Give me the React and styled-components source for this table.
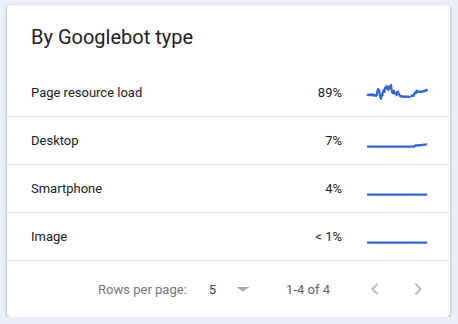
import React from "react";
import styled, { createGlobalStyle } from "styled-components";

const Global = createGlobalStyle`
  html, body { margin: 0; padding: 0; background: #eceef7; }
  body { font-family: Roboto, "Liberation Sans", Arial, sans-serif; }
  #root { padding: 5px 0 0 7px; }
`;

const Card = styled.div`
  width: 443px;
  height: 312px;
  background: #fff;
  border-radius: 4px;
  box-shadow: 0 1px 2px rgba(60, 64, 67, 0.3), 0 1px 3px 1px rgba(60, 64, 67, 0.15);
  display: flex;
  flex-direction: column;
  overflow: hidden;
`;

const Header = styled.div`
  height: 64px;
  display: flex;
  align-items: center;
  padding: 0 24px;
`;

const Title = styled.h2`
  margin: 0;
  font-size: 20px;
  line-height: 28px;
  font-weight: 400;
  color: #202124;
`;

const Row = styled.div`
  height: 47px;
  border-bottom: 1px solid #e0e0e0;
  display: flex;
  align-items: center;
  padding: 0 23px 0 24px;
  font-size: 13px;
  color: #202124;
`;

const Label = styled.div`
  flex: 1;
`;

const Value = styled.div`
  width: 80px;
  text-align: right;
  margin-right: 25px;
`;

const Spark = styled.svg`
  width: 60px;
  height: 20px;
  display: block;
  overflow: visible;
`;

const Footer = styled.div`
  flex: 1;
  display: flex;
  align-items: center;
  justify-content: flex-end;
  padding-right: 20px;
  font-size: 13px;
  color: #757575;
`;

const RowsLabel = styled.span`
  margin-right: 22px;
`;

const PageSize = styled.span`
  color: #424242;
  margin-right: 15px;
`;

const Icon = styled.svg`
  width: 24px;
  height: 24px;
  display: block;
  fill: ${(p) => p.$color};
`;

const Range = styled.span`
  margin: 0 33px 0 31px;
  color: #616161;
`;

const NavGap = styled.div`
  width: 19px;
`;

const rows = [
  {
    label: "Page resource load",
    value: "89%",
    points:
      "0,11.3 1,12.2 2,11.6 3,12.4 4,11.2 5,12.3 6,11.5 7,12.6 8,12 9,12.8 9.7,12.3 10.5,8 11,6 11.6,9 12.2,7 13,14 13.6,12 14,16 15,11 15.5,12.5 16,8 17,7 17.5,9 18,5 19,4.5 19.7,3 20.5,6 21,4 21.5,7 22,5 23,3 23.6,5 24,2 24.5,6 25,9 25.7,10 26.3,8 27,7.7 27.5,10.5 28,10 29,11 29.7,12 30.3,9 31,8.7 31.5,10.5 32,11 33,13 34,13.6 35,13.1 36,13.8 37,13.3 38,13.9 39,13.4 40,14 41,13.6 42,14.1 43,13.7 44,13.2 45,12.8 46,12 46.5,13 47,11 48,9.5 48.6,10.5 49.7,7.7 50.5,9 51,8.8 52,8.3 53,9 53.5,8.7 54.7,8.9 55.5,8.4 56,8.2 57,8.6 57.5,7.6 58.5,7.4 59.3,7.8 60,6",
  },
  {
    label: "Desktop",
    value: "7%",
    points: "0,15.7 47,15.7 48.5,14.3 50,14.6 51,14 52,14.5 53,14 54,14.4 55,13.8 56,14.1 57,13.5 58,13.8 60,13",
  },
  { label: "Smartphone", value: "4%", points: "0,15.7 60,15.7" },
  { label: "Image", value: "< 1%", points: "0,15.7 60,15.7" },
];

export default function App() {
  return (
    <>
      <Global />
      <Card>
        <Header>
          <Title>By Googlebot type</Title>
        </Header>
        {rows.map((r) => (
          <Row key={r.label}>
            <Label>{r.label}</Label>
            <Value>{r.value}</Value>
            <Spark viewBox="0 0 60 20">
              <polyline
                points={r.points}
                fill="none"
                stroke="#3367d6"
                strokeWidth="2.2"
                strokeLinejoin="round"
              />
            </Spark>
          </Row>
        ))}
        <Footer>
          <RowsLabel>Rows per page:</RowsLabel>
          <PageSize>5</PageSize>
          <Icon viewBox="0 0 24 24" $color="#a8a8a8">
            <path d="M5.5 10h13l-6.5 4.6z" />
          </Icon>
          <Range>1-4 of 4</Range>
          <Icon viewBox="0 0 24 24" $color="#bdbdbd">
            <path d="M15.41 7.41L14 6l-6 6 6 6 1.41-1.41L10.83 12z" />
          </Icon>
          <NavGap />
          <Icon viewBox="0 0 24 24" $color="#bdbdbd">
            <path d="M10 6L8.59 7.41 13.17 12l-4.58 4.59L10 18l6-6z" />
          </Icon>
        </Footer>
      </Card>
    </>
  );
}
